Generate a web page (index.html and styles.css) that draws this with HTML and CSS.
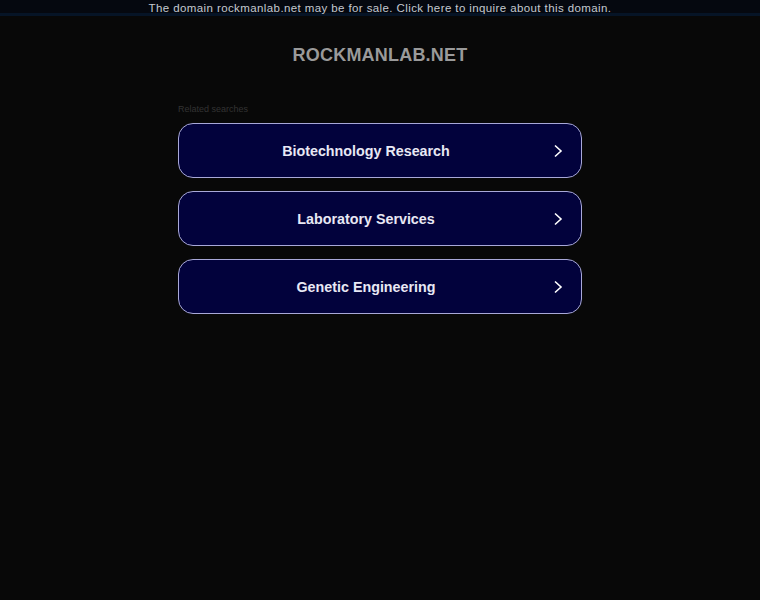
FILE: index.html
```html
<!DOCTYPE html>
<html lang="en">
<head>
  <meta charset="UTF-8">
  <title>rockmanlab.net</title>
  <link rel="stylesheet" href="styles.css">
</head>
<body>

  <!-- Sale banner -->
  <div class="banner">
    <a href="#">The domain rockmanlab.net may be for sale. Click here to inquire about this domain.</a>
  </div>

  <div class="container">
    <h1 class="domain">ROCKMANLAB.NET</h1>

    <div class="related">
      <p class="related-title">Related searches</p>

      <a class="search-link" href="#">
        <span>Biotechnology Research</span>
        <svg class="arrow" viewBox="0 0 10 14" width="10" height="14"><path d="M2 1.5 L8 7 L2 12.5" fill="none" stroke="#fff" stroke-width="1.6"/></svg>
      </a>
      <a class="search-link" href="#">
        <span>Laboratory Services</span>
        <svg class="arrow" viewBox="0 0 10 14" width="10" height="14"><path d="M2 1.5 L8 7 L2 12.5" fill="none" stroke="#fff" stroke-width="1.6"/></svg>
      </a>
      <a class="search-link" href="#">
        <span>Genetic Engineering</span>
        <svg class="arrow" viewBox="0 0 10 14" width="10" height="14"><path d="M2 1.5 L8 7 L2 12.5" fill="none" stroke="#fff" stroke-width="1.6"/></svg>
      </a>
    </div>
  </div>

</body>
</html>
```

FILE: styles.css
```css
body {
  margin: 0;
  background-color: #080808;
  font-family: "Liberation Sans", Arial, sans-serif;
}

.banner {
  height: 13px;
  background-color: #05080f;
  border-bottom: 3px solid #061426;
  text-align: center;
  line-height: 14px;
}

.banner a {
  color: #c4c8d0;
  font-size: 11.5px;
  letter-spacing: 0.4px;
  text-decoration: none;
}

.container {
  width: 404px;
  margin: 0 auto;
}

.domain {
  margin: 28px 0 0;
  text-align: center;
  color: #9a9a9a;
  font-size: 18px;
  font-weight: bold;
  letter-spacing: 0.2px;
  line-height: 22px;
}

.related {
  margin-top: 37px;
}

.related-title {
  margin: 0 0 8px;
  color: #333;
  font-size: 9px;
  line-height: 12px;
}

.search-link {
  position: relative;
  display: flex;
  align-items: center;
  justify-content: center;
  height: 53px;
  margin-bottom: 13px;
  padding-right: 28px;
  background-color: #02023c;
  border: 1px solid #a8a8d8;
  border-radius: 15px;
  color: #e8e8f4;
  font-size: 14.3px;
  font-weight: bold;
  text-decoration: none;
}

.arrow {
  position: absolute;
  right: 18px;
  top: 20px;
}
```
